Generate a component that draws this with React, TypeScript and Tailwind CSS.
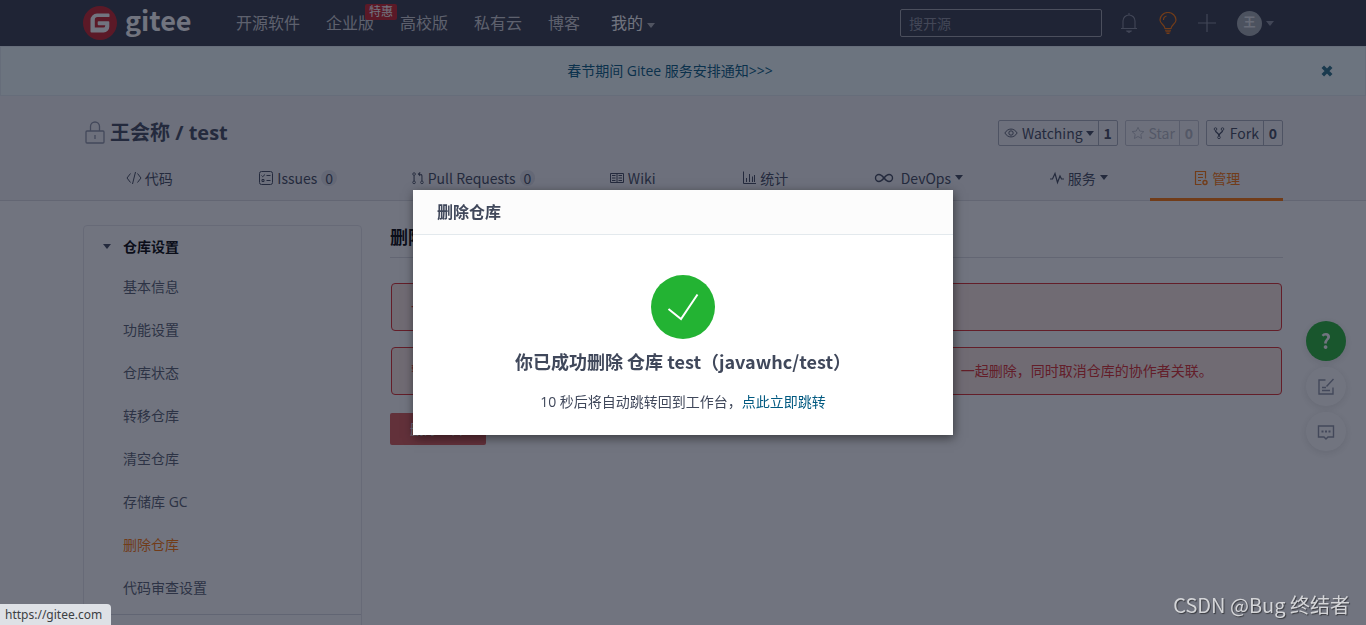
import type { ReactNode } from "react";
import clsx from "clsx";

const navLinks = [
  { label: "开源软件" },
  { label: "企业版", badge: "特惠" },
  { label: "高校版" },
  { label: "私有云" },
  { label: "博客" },
];

const settings = [
  "基本信息",
  "功能设置",
  "仓库状态",
  "转移仓库",
  "清空仓库",
  "存储库 GC",
  "删除仓库",
  "代码审查设置",
];

function Caret({ className }: { className?: string }) {
  return (
    <svg viewBox="0 0 8 5" className={clsx("h-[5px] w-2 shrink-0 fill-current", className)} aria-hidden="true">
      <path d="M0 0h8L4 5z" />
    </svg>
  );
}

function Icon({
  children,
  className = "h-4 w-4",
  viewBox = "0 0 16 16",
}: {
  children: ReactNode;
  className?: string;
  viewBox?: string;
}) {
  return (
    <svg
      viewBox={viewBox}
      className={clsx("shrink-0", className)}
      fill="none"
      stroke="currentColor"
      strokeWidth="1"
      aria-hidden="true"
    >
      {children}
    </svg>
  );
}

function Logo() {
  return (
    <a href="#" className="flex w-[108px] items-center gap-2 text-white" aria-label="gitee">
      <svg viewBox="0 0 34 34" className="h-[34px] w-[34px] shrink-0" aria-hidden="true">
        <circle cx="17" cy="17" r="17" fill="#c71d23" />
        <path
          d="M25.600 7.500H14a6.500 6.500 0 0 0-6.500 6.500v11.600a.9.9 0 0 0 .9.900h12.200a5.700 5.700 0 0 0 5.700-5.700v-4.700a.9.9 0 0 0-.9-.9H15.600a.9.9 0 0 0-.9.900v2.200c0 .5.400.9.900.900h6.600v.5a1.900 1.900 0 0 1-1.900 1.900h-8.500v-7.700a2.800 2.800 0 0 1 2.800-2.800h11a.9.9 0 0 0 .9-.900V8.400a.9.9 0 0 0-.9-.900z"
          fill="#fff"
        />
      </svg>
      <span className="pb-[6px] font-['Noto_Sans_CJK_SC',sans-serif] text-[27px] leading-8 font-bold">gitee</span>
    </a>
  );
}

function TopNav() {
  return (
    <nav className="bg-[#323746] text-[#d0d0d4]">
      <div className="mx-auto flex h-[46px] max-w-[1200px] items-center">
        <Logo />
        <ul className="ml-8 flex items-center text-base">
          {navLinks.map((link) => (
            <li key={link.label} className="relative px-[13px]">
              <a href="#">{link.label}</a>
              {link.badge && (
                <span className="absolute -top-[7px] right-[-10px] rounded-xs bg-[#c71d23] px-1 text-xs leading-4 text-white">
                  {link.badge}
                </span>
              )}
            </li>
          ))}
          <li className="ml-[5px] px-[13px]">
            <button type="button" className="flex items-center gap-1 text-white">
              我的 <Caret className="mt-1 opacity-60" />
            </button>
          </li>
        </ul>
        <div className="ml-auto flex items-center pr-[9px]">
          <input
            type="search"
            aria-label="搜开源"
            placeholder="搜开源"
            className="h-7 w-[202px] rounded-xs border border-[#a0a2aa] bg-transparent px-2 text-sm placeholder:text-[#8c909c]"
          />
          <button type="button" aria-label="通知" className="ml-[18px] text-[#888c9a]">
            <Icon className="h-[22px] w-[18px]" viewBox="0 0 18 22">
              <path d="M9 1v2M1 16.500h16M3 16.500V9a6 6 0 0 1 12 0v7.500" strokeWidth="1.100" />
              <path d="M6.500 19h5L9 20.500z" fill="currentColor" />
            </Icon>
          </button>
          <button type="button" aria-label="动态" className="ml-[21px] text-[#fe7300]">
            <Icon className="h-[22px] w-[18px]" viewBox="0 0 18 22">
              <path d="M6 16.500c0-3.500-5-4.500-5-8.500a8 7.500 0 0 1 16 0c0 4-5 5-5 8.500z" strokeWidth="1.200" />
              <path d="M4.500 8a4 4 0 0 1 3-4" strokeWidth="1.200" />
              <path d="M6 18.200h6M6.500 19.800h5M7.500 21.400h3" strokeWidth="1.100" />
            </Icon>
          </button>
          <button type="button" aria-label="新建" className="ml-[21px] text-[#888c9a]">
            <Icon className="h-[18px] w-[18px]" viewBox="0 0 18 18">
              <path d="M9 0v18M0 9h18" strokeWidth="1.200" />
            </Icon>
          </button>
          <button type="button" className="ml-[21px] flex items-center gap-1 text-[#888c9a]">
            <span className="flex h-[25px] w-[25px] items-center justify-center rounded-full bg-[#a4aaaf] text-xs font-bold text-[#e6e8ea]">
              王
            </span>
            <Caret />
          </button>
        </div>
      </div>
    </nav>
  );
}

function Notice() {
  return (
    <div className="flex h-[50px] items-center border border-[#e3eef2] bg-[#f3ffff] px-8 text-sm">
      <div className="flex-1 pr-[14px] text-center">
        <a href="#" className="text-[#005980]">
          春节期间 Gitee 服务安排通知&gt;&gt;&gt;
        </a>
      </div>
      <button type="button" aria-label="关闭" className="text-[#276f86]">
        <Icon className="h-3 w-3" viewBox="0 0 12 12">
          <path d="M1.800 1.800l8.400 8.400M10.200 1.800l-8.400 8.400" strokeWidth="3.600" />
        </Icon>
      </button>
    </div>
  );
}

function CountButton({
  label,
  count,
  icon,
  caret,
  disabled,
}: {
  label: string;
  count: number;
  icon: ReactNode;
  caret?: boolean;
  disabled?: boolean;
}) {
  return (
    <div
      className={clsx(
        "flex h-[26px] rounded-xs border font-['Noto_Sans_CJK_SC',sans-serif] text-sm",
        disabled ? "border-[#c3c5cf] text-[#b5b8c2]" : "border-[#a9adba] text-[#40485b]",
      )}
    >
      <button type="button" disabled={disabled} className="flex items-center pr-1 pl-[5px]">
        {icon}
        <span className="ml-1">{label}</span>
        {caret && <Caret className="ml-[3px]" />}
      </button>
      <a href="#" className="flex w-[19px] items-center justify-center border-l border-inherit font-bold">
        {count}
      </a>
    </div>
  );
}

function Tab({
  label,
  icon,
  count,
  caret,
  active,
}: {
  label: string;
  icon: ReactNode;
  count?: number;
  caret?: boolean;
  active?: boolean;
}) {
  return (
    <a
      href="#"
      aria-current={active ? "page" : undefined}
      className={clsx(
        "flex h-[44px] flex-auto items-center justify-center border-b-3 font-['Noto_Sans_CJK_SC',sans-serif] text-sm",
        active ? "border-[#fe7300] text-[#fe7300]" : "border-transparent text-[#40485b]",
      )}
    >
      {icon}
      <span className="ml-[3px]">{label}</span>
      {count !== undefined && (
        <span className="-mr-3 ml-1 rounded-full bg-[#dfe1e8] px-1 leading-4">{count}</span>
      )}
      {caret && <Caret className="ml-1" />}
    </a>
  );
}

function RepoHeader() {
  return (
    <header className="border-b border-[#dcdde2] bg-[#f5f5f7]">
      <div className="mx-auto max-w-[1200px]">
        <div className="flex items-center pt-[23px]">
          <Icon className="h-6 w-6 text-[#8c92a4]" viewBox="0 0 24 24">
            <rect x="3" y="10" width="18" height="12" rx="1" strokeWidth="1.300" />
            <path d="M7.500 10V5.500a4.500 4.500 0 0 1 9 0V10M12 14v4" strokeWidth="1.300" />
          </Icon>
          <h1 className="ml-[3px] text-xl font-bold text-[#40485b]">
            <a href="#">王会称</a> / <a href="#">test</a>
          </h1>
          <div className="ml-auto flex gap-[7px]">
            <CountButton
              label="Watching"
              count={1}
              caret
              icon={
                <Icon className="h-[14px] w-[14px]">
                  <path d="M1 8c3.500-6 10.500-6 14 0-3.500 6-10.500 6-14 0z" />
                  <circle cx="8" cy="8" r="2.500" />
                </Icon>
              }
            />
            <CountButton
              label="Star"
              count={0}
              disabled
              icon={
                <Icon className="h-[14px] w-[14px]">
                  <path d="M8 1.500l2 4.300 4.700.6-3.500 3.200.9 4.700L8 12l-4.100 2.300.9-4.700L1.300 6.400 6 5.800z" />
                </Icon>
              }
            />
            <CountButton
              label="Fork"
              count={0}
              icon={
                <Icon className="h-[14px] w-[14px]">
                  <circle cx="4" cy="3.500" r="1.500" />
                  <circle cx="12" cy="3.500" r="1.500" />
                  <circle cx="8" cy="13" r="1.500" />
                  <path d="M4 5c0 3 4 2.500 4 6.500M12 5c0 3-4 2.500-4 6.500" strokeWidth="1.600" />
                </Icon>
              }
            />
          </div>
        </div>
        <div className="-mb-px flex pt-[10px]">
          <Tab
            label="代码"
            icon={
              <Icon>
                <path d="M4.500 3.500L1 8l3.500 4.500M11.500 3.500L15 8l-3.500 4.500M9.500 2l-3 12" />
              </Icon>
            }
          />
          <Tab
            label="Issues"
            count={0}
            icon={
              <Icon>
                <rect x="1.500" y="1.500" width="13" height="13" rx="2" />
                <path d="M3.500 5.500l1.200 1.200L7 4.500M8.500 5.500h4M8.500 10.500h4M4 9.500h2v2H4z" />
              </Icon>
            }
          />
          <Tab
            label="Pull Requests"
            count={0}
            icon={
              <Icon className="h-[14px] w-[14px]">
                <circle cx="3.500" cy="3.500" r="1.500" />
                <circle cx="3.500" cy="13" r="1.500" />
                <circle cx="12.500" cy="13" r="1.500" />
                <path d="M3.500 5v6.500M12.500 11.500V5.500c0-1.500-1-2-4-2M10.500 1.500l-2 2 2 2" strokeWidth="1.200" />
              </Icon>
            }
          />
          <Tab
            label="Wiki"
            icon={
              <Icon>
                <path d="M1.500 3.500h13v9h-13zM8 3.500v9M3 5.500h3.500M3 8h3.500M3 10.500h3.500M9.500 5.500H13M9.500 8H13M9.500 10.500H13" />
              </Icon>
            }
          />
          <Tab
            label="统计"
            icon={
              <Icon>
                <path d="M2.500 1.500v12H15M5.500 12V8M8.500 12V4M11.500 12V6.500M13.500 12V5" />
              </Icon>
            }
          />
          <Tab
            label="DevOps"
            caret
            icon={
              <Icon className="mr-1 h-4 w-5" viewBox="0 0 20 16">
                <path
                  d="M10 8C8 5.500 7 4.500 5 4.500a3.500 3.500 0 0 0 0 7c2 0 3-1 5-3.500s3-3.500 5-3.500a3.500 3.500 0 0 1 0 7c-2 0-3-1-5-3.500z"
                  strokeWidth="1.400"
                />
              </Icon>
            }
          />
          <Tab
            label="服务"
            caret
            icon={
              <Icon>
                <path d="M1 9h2.500L6 3.500 8.500 12.500 11 6l1.500 3H15" strokeWidth="1.200" />
              </Icon>
            }
          />
          <Tab
            label="管理"
            active
            icon={
              <Icon>
                <path d="M8.500 14.500h-6v-13h10v7M5 4.500h5M5 7.500h5M5 10.500h3" strokeWidth="1.200" />
                <circle cx="12" cy="12.500" r="2" strokeWidth="1.400" />
              </Icon>
            }
          />
        </div>
      </div>
    </header>
  );
}

function Sidebar() {
  return (
    <aside className="w-[279px] shrink-0 rounded-sm border border-[#e6e7ec] pb-10 text-sm text-[#555c6e]">
      <section className="border-b border-[#d8dae0] pb-[5px]">
        <h2 className="flex h-[39px] items-center gap-3 pt-[2px] pl-[19px] font-bold text-black">
          <Caret className="text-[#40485b]" /> 仓库设置
        </h2>
        <ul>
          {settings.map((item) => (
            <li key={item}>
              <a
                href="#"
                className={clsx(
                  "flex h-[43px] items-center pl-[39px]",
                  item === "删除仓库" && "text-[#fe7300]",
                )}
              >
                {item}
              </a>
            </li>
          ))}
        </ul>
      </section>
    </aside>
  );
}

function Warning({ children }: { children: ReactNode }) {
  return (
    <p className="mx-px flex min-h-12 items-center rounded-sm border border-[#db2828] bg-[#fce8e2] px-[19px] text-sm text-[#db2828]">
      {children}
    </p>
  );
}

function DeletePanel() {
  return (
    <main className="min-w-0 flex-1">
      <h2 className="border-b border-[#dcdde2] pb-[7px] text-lg leading-[25px] font-bold text-black">删除仓库</h2>
      <div className="mt-[25px] mb-[18px] flex flex-col gap-4">
        <Warning>一旦你删除了仓库，将无法恢复，请慎重操作！</Warning>
        <Warning>
          警告：删除仓库后，仓库内的代码、任务、评论、附件、拉取请求与文档等相关的数据， 一起删除，同时取消仓库的协作者关联。
        </Warning>
      </div>
      <button type="button" className="h-8 w-24 rounded-xs bg-[#d95854] text-sm text-white">
        删除仓库
      </button>
    </main>
  );
}

function FloatingTools() {
  return (
    <div className="fixed top-[321px] right-5 flex flex-col gap-[6px] text-[#8c92a4]">
      <button
        type="button"
        aria-label="帮助"
        className="h-10 w-10 rounded-full bg-[#23b333] font-['Noto_Sans_CJK_SC',sans-serif] text-xl leading-9 font-bold text-white shadow-[0_2px_10px_rgba(0,0,0,0.12)]"
      >
        ?
      </button>
      <button
        type="button"
        aria-label="反馈"
        className="flex h-[39px] w-10 items-center justify-center rounded-full bg-white shadow-[0_2px_10px_rgba(0,0,0,0.12)]"
      >
        <Icon className="h-[18px] w-[18px]" viewBox="0 0 18 18">
          <path d="M8.500 2H2v14h14V9.500M9.500 8.500L16.500 1M5 9.500h4M5 12.500h8" strokeWidth="1.400" />
        </Icon>
      </button>
      <button
        type="button"
        aria-label="评论"
        className="flex h-[39px] w-10 items-center justify-center rounded-full bg-white shadow-[0_2px_10px_rgba(0,0,0,0.12)]"
      >
        <Icon className="h-[18px] w-[18px]" viewBox="0 0 18 18">
          <path d="M1.500 3h15v11H11l-2 2-2-2H1.500z" strokeWidth="1.400" />
          <path d="M4.500 8.500h2M8 8.500h2M11.500 8.500h2" strokeWidth="2" />
        </Icon>
      </button>
    </div>
  );
}

function DeletedDialog() {
  return (
    <div className="fixed inset-0 flex items-center justify-center bg-[#12172a]/60">
      <div
        role="dialog"
        aria-modal="true"
        aria-labelledby="dialog-title"
        className="w-[540px] max-w-full bg-white text-center text-[#40485b] shadow-[1px_3px_10px_rgba(0,0,0,0.5)]"
      >
        <h2
          id="dialog-title"
          className="border-b border-[#e3e9ed] bg-[#fcfcfc] px-6 py-[10px] text-left text-base font-bold"
        >
          删除仓库
        </h2>
        <div className="pt-10 pb-[22px]">
          <svg viewBox="0 0 64 64" className="mx-auto h-16 w-16" aria-hidden="true">
            <circle cx="32" cy="32" r="32" fill="#23b333" />
            <path d="M17.500 34l12.500 10L46.500 19.500" fill="none" stroke="#fff" strokeWidth="2" />
          </svg>
          <h3 className="mt-2 font-['Noto_Sans_CJK_SC',sans-serif] text-lg leading-7 font-bold">
            你已成功删除 仓库 test（javawhc/test）
          </h3>
          <p className="mt-4 text-sm leading-[22px]">
            10 秒后将自动跳转回到工作台，
            <a href="#" className="text-[#005980]">
              点此立即跳转
            </a>
          </p>
        </div>
      </div>
    </div>
  );
}

export default function App() {
  return (
    <div className="h-screen overflow-hidden bg-white font-['Open_Sans','Noto_Sans_CJK_SC',sans-serif]">
      <TopNav />
      <Notice />
      <RepoHeader />
      <div className="mx-auto flex max-w-[1200px] gap-7 pt-6">
        <Sidebar />
        <DeletePanel />
      </div>
      <FloatingTools />
      <DeletedDialog />
      <div className="fixed bottom-0 left-0 rounded-tr-sm bg-[#dee1e6] pr-[9px] pl-[5px] font-['Noto_Sans',sans-serif] text-xs leading-[21px] text-[#3c4043]">
        https://gitee.com
      </div>
      <div className="fixed right-4 bottom-[6px] font-['Noto_Sans_CJK_SC',sans-serif] text-xl text-[#d4d5d8] [text-shadow:1px_1px_1px_rgba(0,0,0,0.5)]">
        CSDN @Bug 终结者
      </div>
    </div>
  );
}
